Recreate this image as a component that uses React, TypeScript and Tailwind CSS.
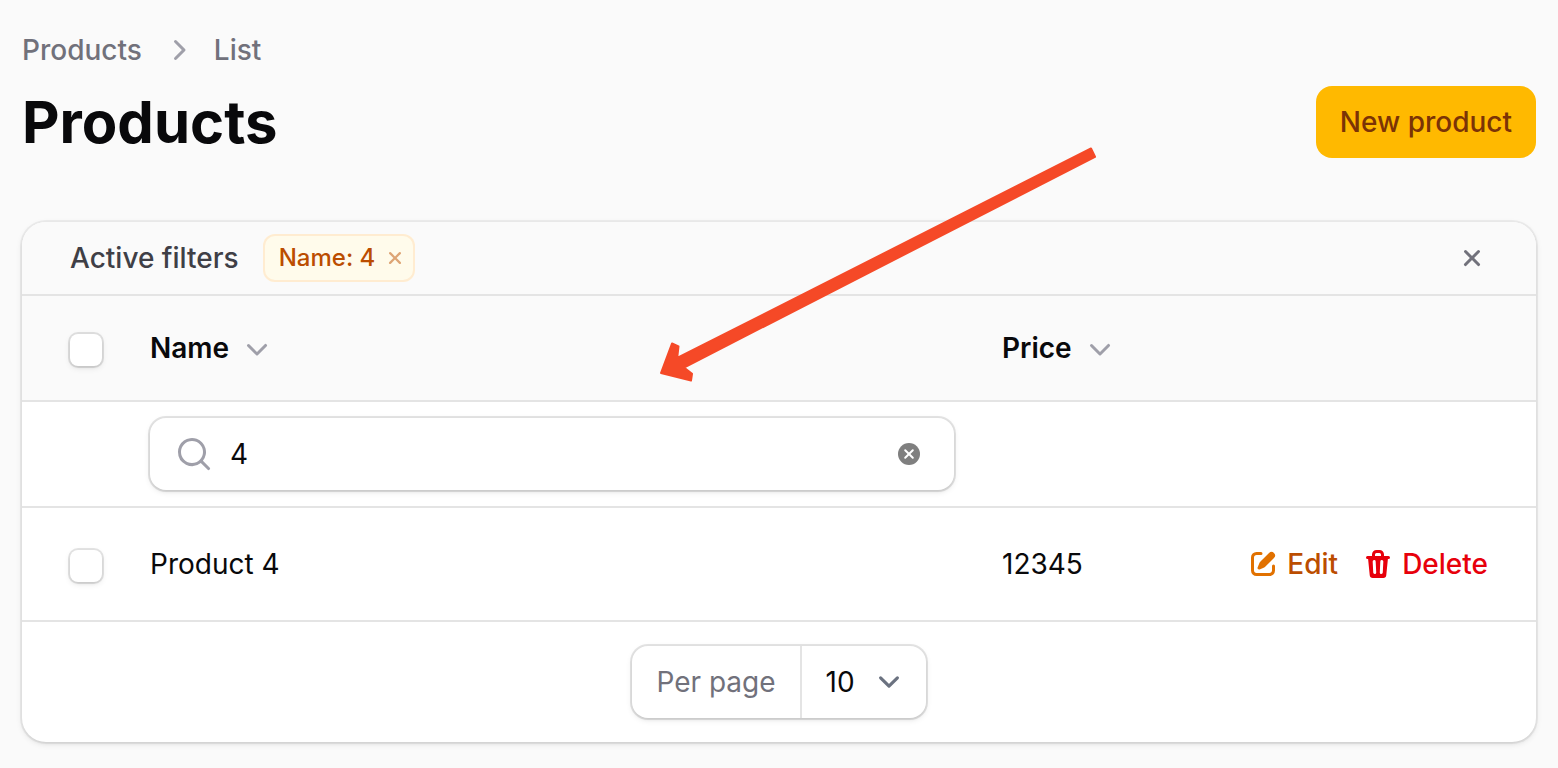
import { useState } from "react";
import {
  HiMiniChevronDown,
  HiMiniChevronRight,
  HiMiniMagnifyingGlass,
} from "react-icons/hi2";

const products = [{ id: 4, name: "Product 4", price: 12345 }];

type IconProps = { className?: string };

const CloseIcon: React.FC<IconProps> = ({ className }) => (
  <svg viewBox="0 0 16 16" fill="currentColor" className={className}>
    <path d="M5.28 4.22a.75.75 0 0 0-1.06 1.06L6.94 8l-2.72 2.72a.75.75 0 1 0 1.06 1.06L8 9.06l2.72 2.72a.75.75 0 1 0 1.06-1.06L9.06 8l2.72-2.72a.75.75 0 0 0-1.06-1.06L8 6.94 5.28 4.22Z" />
  </svg>
);

const EditIcon: React.FC<IconProps> = ({ className }) => (
  <svg viewBox="0 0 16 16" fill="currentColor" className={className}>
    <path d="M13.488 2.513a1.75 1.75 0 0 0-2.475 0L6.75 6.774a2.75 2.75 0 0 0-.596.892l-.848 2.047a.75.75 0 0 0 .98.98l2.047-.848a2.75 2.75 0 0 0 .892-.596l4.261-4.262a1.75 1.75 0 0 0 0-2.474Z" />
    <path d="M4.75 3.5c-.69 0-1.25.56-1.25 1.25v6.5c0 .69.56 1.25 1.25 1.25h6.5c.69 0 1.25-.56 1.25-1.25V9A.75.75 0 0 1 14 9v2.25A2.75 2.75 0 0 1 11.25 14h-6.5A2.75 2.75 0 0 1 2 11.25v-6.5A2.75 2.75 0 0 1 4.75 2H7a.75.75 0 0 1 0 1.5H4.75Z" />
  </svg>
);

const TrashIcon: React.FC<IconProps> = ({ className }) => (
  <svg viewBox="0 0 16 16" fill="currentColor" className={className}>
    <path
      fillRule="evenodd"
      clipRule="evenodd"
      d="M5 3.25V4H2.75a.75.75 0 0 0 0 1.5h.3l.815 8.15A1.5 1.5 0 0 0 5.357 15h5.285a1.5 1.5 0 0 0 1.493-1.35l.815-8.15h.3a.75.75 0 0 0 0-1.5H11v-.75A2.25 2.25 0 0 0 8.75 1h-1.5A2.25 2.25 0 0 0 5 3.25Zm2.25-.75a.75.75 0 0 0-.75.75V4h3v-.75a.75.75 0 0 0-.75-.75h-1.5ZM6.05 6a.75.75 0 0 1 .787.713l.275 5.5a.75.75 0 0 1-1.498.075l-.275-5.5A.75.75 0 0 1 6.05 6Zm3.9 0a.75.75 0 0 1 .712.787l-.275 5.5a.75.75 0 0 1-1.498-.075l.275-5.5a.75.75 0 0 1 .786-.711Z"
    />
  </svg>
);

const Checkbox: React.FC<{ label: string }> = ({ label }) => (
  <input
    type="checkbox"
    aria-label={label}
    className="block size-8 mt-1 ml-12 appearance-none rounded-lg bg-white ring-2 ring-black/10 shadow-[0_2px_6px_rgba(0,0,0,0.1),0_2px_4px_-2px_rgba(0,0,0,0.1)] checked:bg-amber-500"
  />
);

const SortButton: React.FC<{ label: string }> = ({ label }) => (
  <button type="button" className="flex items-center gap-2 font-semibold">
    {label}
    <HiMiniChevronDown className="size-10 text-[#9f9fa9]" />
  </button>
);

const Header: React.FC = () => (
  <header>
    <nav aria-label="Breadcrumb" className="mb-4">
      <ol className="flex items-center gap-4 font-medium text-[#71717b]">
        <li>
          <a href="#products">Products</a>
        </li>
        <li className="flex items-center gap-4">
          <HiMiniChevronRight className="size-10 text-[#9f9fa9]" />
          <a href="#list">List</a>
        </li>
      </ol>
    </nav>
    <div className="flex items-center justify-between">
      <h1 className="text-[58px] leading-[72px] font-bold">Products</h1>
      <button
        type="button"
        className="h-[72px] px-6 rounded-2xl bg-[#ffb900] font-medium text-[#7b3306]"
      >
        New product
      </button>
    </div>
  </header>
);

const ActiveFilters: React.FC = () => (
  <div className="flex items-center justify-between px-12 py-3 border-b-2 border-[#e4e4e4] bg-[#fafafa] rounded-t-3xl">
    <div className="flex items-center gap-6">
      <span className="font-medium text-[#3f3f46]">Active filters</span>
      <span className="flex items-center gap-2 h-12 pl-4 pr-2 rounded-xl bg-[#fffbeb] text-2xl font-medium text-[#bb4d00] inset-ring-2 inset-ring-[#ffecd1]">
        Name: 4
        <button type="button" aria-label="Remove filter">
          <CloseIcon className="block size-6 text-[#bb4d00]/50" />
        </button>
      </span>
    </div>
    <button type="button" aria-label="Remove all filters">
      <CloseIcon className="block size-8 text-[#71717b]" />
    </button>
  </div>
);

const ProductsTable: React.FC = () => {
  const [search, setSearch] = useState("4");

  return (
    <table className="w-full table-fixed text-left">
      <colgroup>
        <col className="w-[104px]" />
        <col />
        <col className="w-[200px]" />
        <col className="w-[358px]" />
      </colgroup>
      <thead>
        <tr className="h-[105px] border-b-2 border-[#e4e4e4] bg-[#fafafa]">
          <th>
            <Checkbox label="Select all" />
          </th>
          <th className="px-6">
            <SortButton label="Name" />
          </th>
          <th className="px-6">
            <SortButton label="Price" />
          </th>
          <th />
        </tr>
        <tr className="h-[106px] border-b-2 border-[#e4e4e4]">
          <td />
          <td className="px-6">
            <div className="flex items-center gap-4 h-[72px] px-6 rounded-2xl bg-white ring-2 ring-black/10 shadow-[0_2px_6px_rgba(0,0,0,0.1),0_2px_4px_-2px_rgba(0,0,0,0.1)]">
              <HiMiniMagnifyingGlass className="size-10 shrink-0 text-[#9f9fa9]" />
              <input
                type="text"
                aria-label="Search by name"
                value={search}
                onChange={(e) => setSearch(e.target.value)}
                className="flex-1 min-w-0 outline-none"
              />
              <button
                type="button"
                aria-label="Clear search"
                onClick={() => setSearch("")}
                className="mr-[10px]"
              >
                <svg viewBox="0 0 22 22" className="block size-[22px]">
                  <circle cx="11" cy="11" r="11" fill="#7f7f7f" />
                  <path
                    d="M7.2 7.2l7.6 7.6M14.8 7.2l-7.6 7.6"
                    stroke="#fff"
                    strokeWidth="2"
                    strokeLinecap="round"
                  />
                </svg>
              </button>
            </div>
          </td>
          <td />
          <td />
        </tr>
      </thead>
      <tbody>
        {products.map((product) => (
          <tr key={product.id} className="h-[114px] border-b-2 border-[#e4e4e4]">
            <td>
              <Checkbox label={`Select ${product.name}`} />
            </td>
            <td className="px-6">{product.name}</td>
            <td className="px-6">{product.price}</td>
            <td className="pr-12">
              <div className="flex items-center justify-end gap-6 font-medium">
                <a href="#edit" className="flex items-center gap-2 text-[#bb4d00]">
                  <EditIcon className="size-8 text-[#e17100]" />
                  Edit
                </a>
                <button type="button" className="flex items-center gap-2 text-[#e7000b]">
                  <TrashIcon className="size-8" />
                  Delete
                </button>
              </div>
            </td>
          </tr>
        ))}
      </tbody>
    </table>
  );
};

const Pagination: React.FC = () => (
  <div className="flex justify-center py-6">
    <div className="flex h-[72px] rounded-2xl bg-white ring-2 ring-black/10 shadow-[0_2px_6px_rgba(0,0,0,0.1),0_2px_4px_-2px_rgba(0,0,0,0.1)]">
      <label
        htmlFor="per-page"
        className="flex items-center px-6 border-r-2 border-[#e4e4e4] text-[#71717b]"
      >
        Per page
      </label>
      <div className="relative">
        <select
          id="per-page"
          defaultValue="10"
          className="h-full w-[124px] pl-6 appearance-none bg-transparent outline-none"
        >
          <option>5</option>
          <option>10</option>
          <option>25</option>
          <option>50</option>
        </select>
        <svg
          viewBox="0 0 20 20"
          fill="none"
          className="absolute inset-y-0 right-4 my-auto size-[42px] pointer-events-none"
        >
          <path
            d="m6 8 4 4 4-4"
            stroke="#6b7280"
            strokeWidth="1.5"
            strokeLinecap="round"
            strokeLinejoin="round"
          />
        </svg>
      </div>
    </div>
  </div>
);

const Arrow: React.FC = () => (
  <svg
    viewBox="0 0 438 236"
    className="absolute top-[147px] left-[659px] w-[438px] h-[236px] pointer-events-none"
  >
    <path
      d="M432 1.5L436 9.8L25 220.5L33 226.8L32 233.5L2 226L13 196.5L19.5 199.5L18.2 211Z"
      fill="#f54927"
      stroke="#f54927"
      strokeWidth="2"
      strokeLinejoin="round"
    />
  </svg>
);

const App: React.FC = () => {
  return (
    <div className="relative min-h-screen px-[22px] pt-[30px] pb-6 bg-[#fafafa] font-[Inter,sans-serif] text-[28px] leading-10 text-[#09090b]">
      <Header />
      <main className="mt-16 rounded-3xl bg-white ring-2 ring-black/5 shadow-[0_2px_6px_rgba(0,0,0,0.1),0_2px_4px_-2px_rgba(0,0,0,0.1)]">
        <ActiveFilters />
        <ProductsTable />
        <Pagination />
      </main>
      <Arrow />
    </div>
  );
};

export default App;
